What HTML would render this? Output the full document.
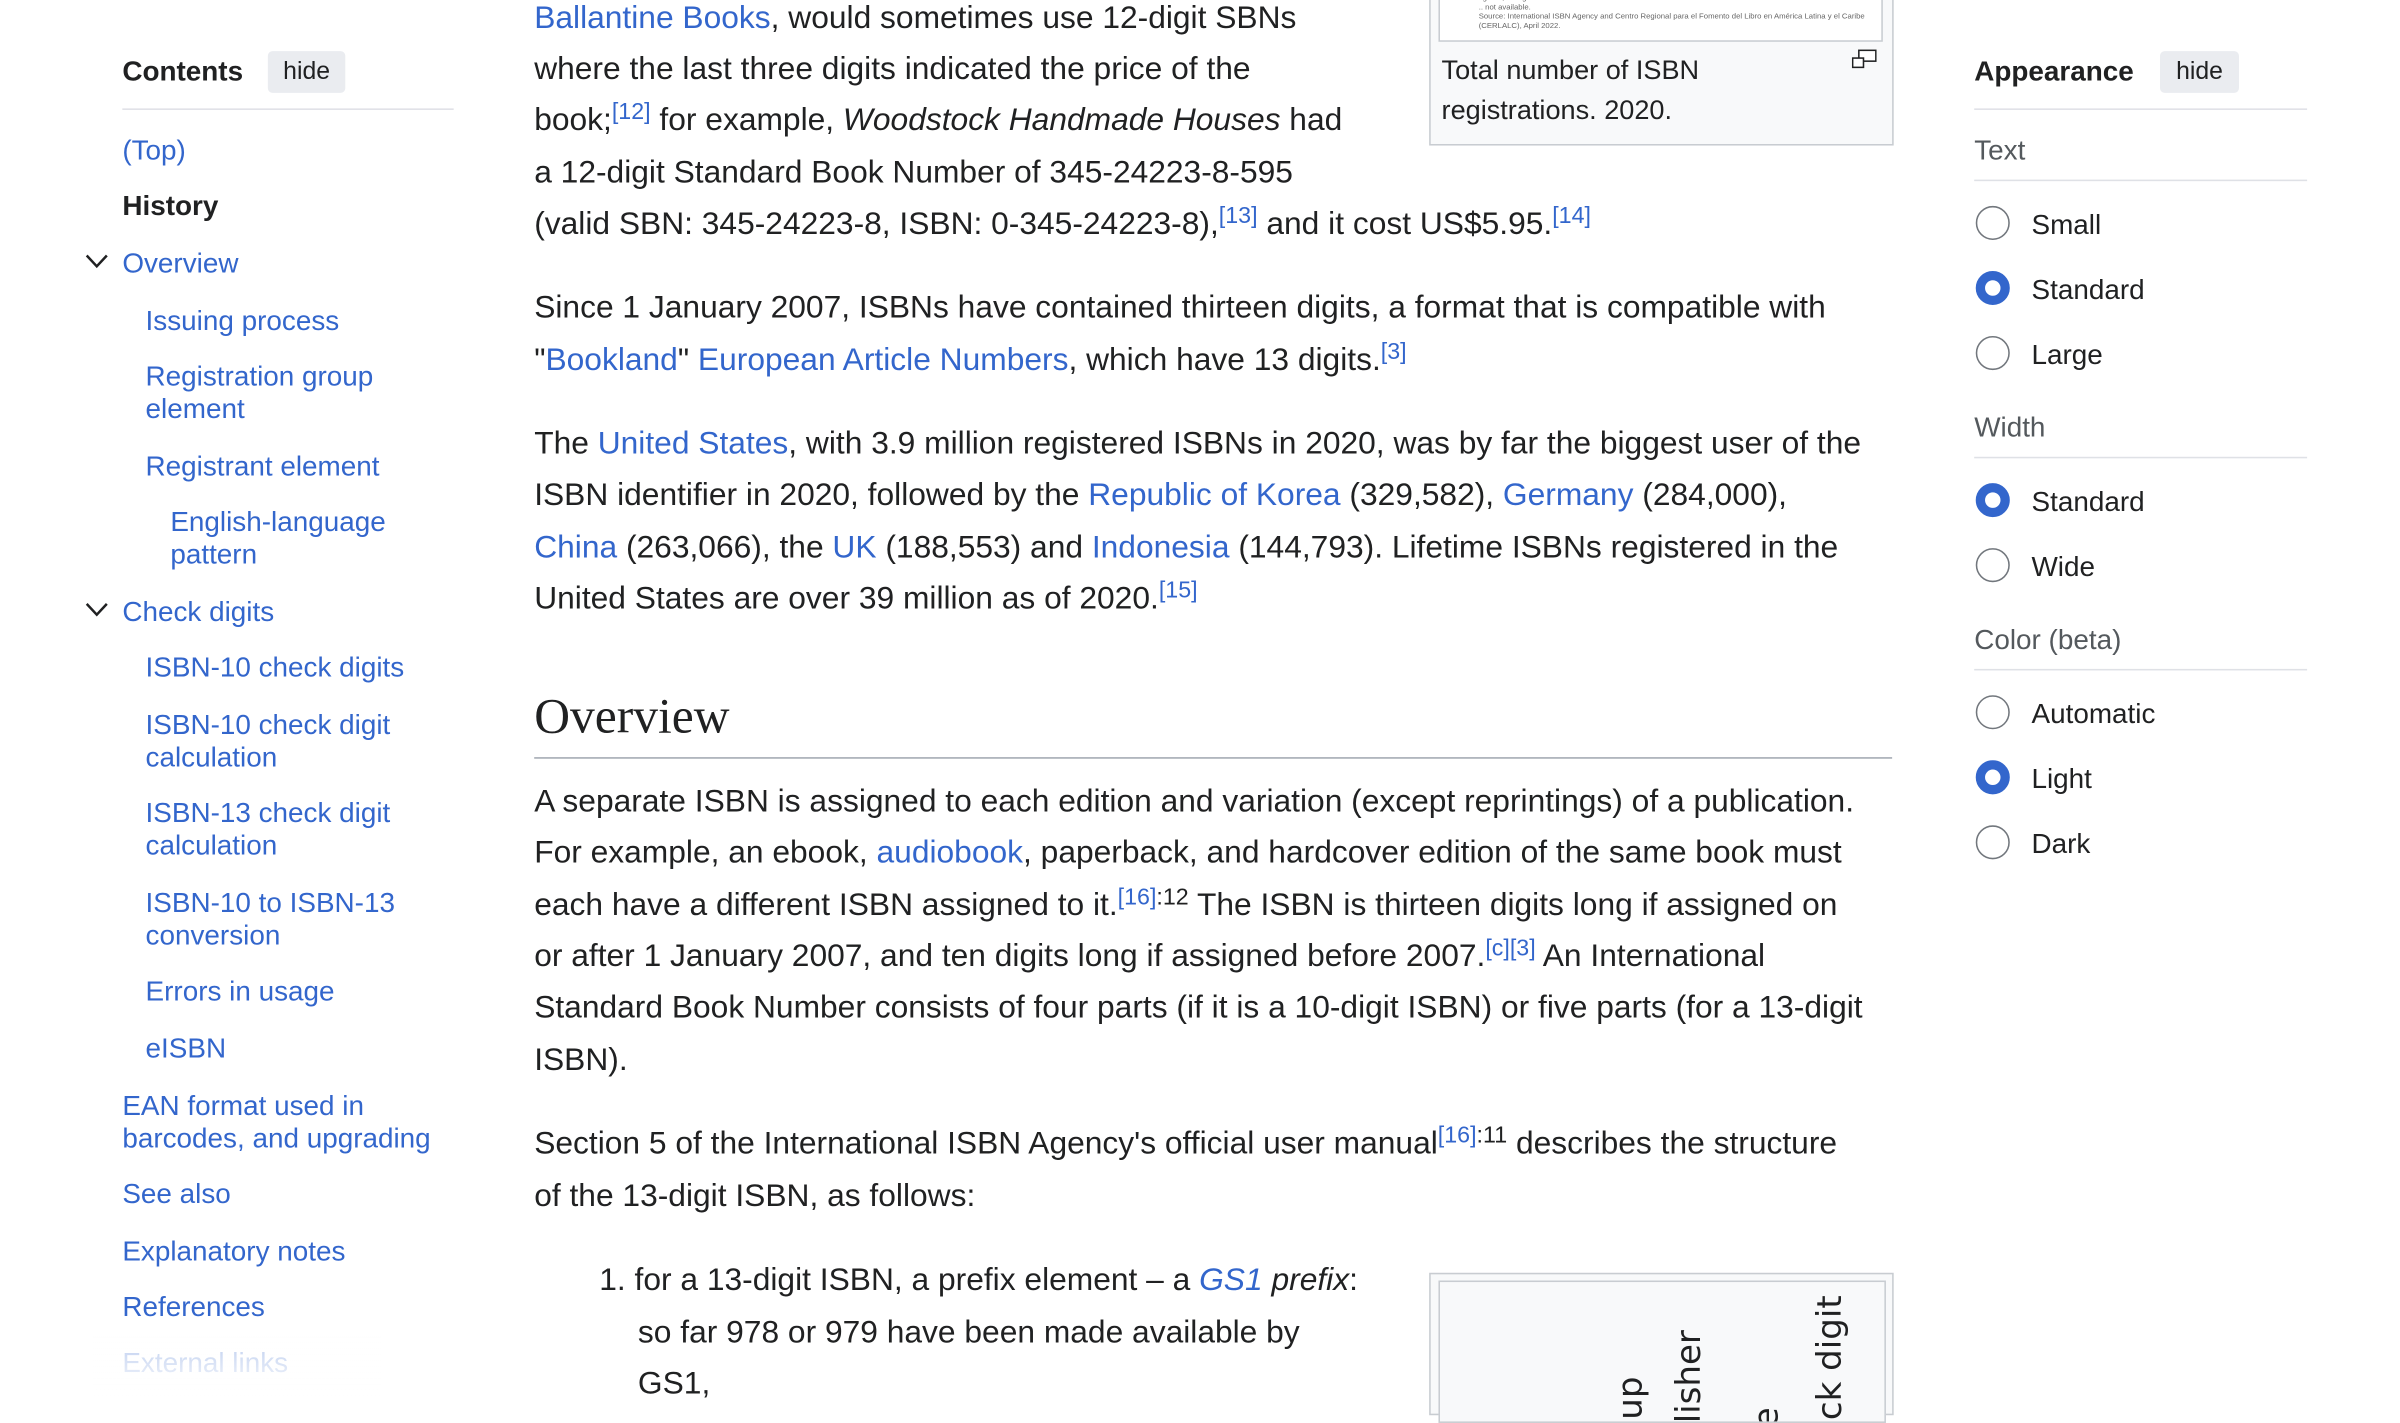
<!DOCTYPE html>
<html><head><meta charset="utf-8"><style>
html,body{margin:0;padding:0;background:#fff;overflow:hidden;width:2400px;height:1398px}
#w{position:absolute;left:0;top:0;width:1550px;height:903px;transform:scale(1.548387);transform-origin:0 0;font-family:"Liberation Sans",Arial,sans-serif;color:#202122}
.a{position:absolute;white-space:nowrap}
a{color:#3366cc;text-decoration:none}
.t{font-size:18px;line-height:21px;color:#3366cc}
.m{font-size:20.5px;line-height:34px}
sup{font-size:15px;line-height:0;vertical-align:7px;color:#3366cc}
sup.n{color:#202122}
.hb{position:absolute;background:#eaecf0;border-radius:3px;font-size:16px;line-height:27px;text-align:center;color:#202122}
.ln{position:absolute;height:1px;background:#dfe1e6}
.r{position:absolute;width:22px;height:22px;border:1.5px solid #72777d;border-radius:50%;box-sizing:border-box}
.r.on{border:6.5px solid #3366cc;background:#fff}
.rl{font-size:18px}
.g{font-size:18px;color:#54595d}
.v{position:absolute;transform:rotate(-90deg);transform-origin:0 0;font-family:'DejaVu Sans',sans-serif;font-size:22px;line-height:24px;white-space:nowrap}
</style></head><body><div id="w">
<!-- left TOC -->
<div class="a" style="left:79px;top:36px;font-size:18px;font-weight:bold">Contents</div>
<div class="hb" style="left:173px;top:33px;width:50px">hide</div>
<div class="ln" style="left:79px;top:70px;width:214px"></div>
<div class="a t" style="left:79px;top:87px">(Top)</div>
<div class="a" style="left:79px;top:123px;font-size:18px;font-weight:bold">History</div>
<svg class="a" style="left:55px;top:163px" width="16" height="12"><path d="M1 2 L7.5 9 L14 2" stroke="#202122" stroke-width="1.6" fill="none"/></svg>
<div class="a t" style="left:79px;top:160px">Overview</div>
<div class="a t" style="left:94px;top:197px">Issuing process</div>
<div class="a t" style="left:94px;top:233px">Registration group<br>element</div>
<div class="a t" style="left:94px;top:291px">Registrant element</div>
<div class="a t" style="left:110px;top:327px">English-language<br>pattern</div>
<svg class="a" style="left:55px;top:388px" width="16" height="12"><path d="M1 2 L7.5 9 L14 2" stroke="#202122" stroke-width="1.6" fill="none"/></svg>
<div class="a t" style="left:79px;top:385px">Check digits</div>
<div class="a t" style="left:94px;top:421px">ISBN-10 check digits</div>
<div class="a t" style="left:94px;top:458px">ISBN-10 check digit<br>calculation</div>
<div class="a t" style="left:94px;top:515px">ISBN-13 check digit<br>calculation</div>
<div class="a t" style="left:94px;top:573px">ISBN-10 to ISBN-13<br>conversion</div>
<div class="a t" style="left:94px;top:630px">Errors in usage</div>
<div class="a t" style="left:94px;top:667px">eISBN</div>
<div class="a t" style="left:79px;top:704px">EAN format used in<br>barcodes, and upgrading</div>
<div class="a t" style="left:79px;top:761px">See also</div>
<div class="a t" style="left:79px;top:798px">Explanatory notes</div>
<div class="a t" style="left:79px;top:834px">References</div>
<div class="a t" style="left:79px;top:870px;opacity:.35">External links</div>
<div class="a" style="left:60px;top:860px;width:240px;height:43px;background:linear-gradient(rgba(255,255,255,0),#fff)"></div>

<!-- main -->
<div class="a m" style="left:345px;top:-5px"><a>Ballantine Books</a>, would sometimes use 12-digit SBNs</div>
<div class="a m" style="left:345px;top:28px">where the last three digits indicated the price of the</div>
<div class="a m" style="left:345px;top:61px">book;<sup>[12]</sup> for example, <i>Woodstock Handmade Houses</i> had</div>
<div class="a m" style="left:345px;top:95px">a 12-digit Standard Book Number of 345-24223-8-595</div>
<div class="a m" style="left:345px;top:128px">(valid SBN: 345-24223-8, ISBN: 0-345-24223-8),<sup>[13]</sup> and it cost US$5.95.<sup>[14]</sup></div>

<div class="a m" style="left:345px;top:182px">Since 1 January 2007, ISBNs have contained thirteen digits, a format that is compatible with</div>
<div class="a m" style="left:345px;top:216px">"<a>Bookland</a>" <a>European Article Numbers</a>, which have 13 digits.<sup>[3]</sup></div>

<div class="a m" style="left:345px;top:270px">The <a>United States</a>, with 3.9 million registered ISBNs in 2020, was by far the biggest user of the</div>
<div class="a m" style="left:345px;top:303px">ISBN identifier in 2020, followed by the <a>Republic of Korea</a> (329,582), <a>Germany</a> (284,000),</div>
<div class="a m" style="left:345px;top:337px"><a>China</a> (263,066), the <a>UK</a> (188,553) and <a>Indonesia</a> (144,793). Lifetime ISBNs registered in the</div>
<div class="a m" style="left:345px;top:370px">United States are over 39 million as of 2020.<sup>[15]</sup></div>

<div class="a" style="left:345px;top:442px;font-family:'Liberation Serif',serif;font-size:32px;line-height:40px">Overview</div>
<div class="a" style="left:345px;top:489px;width:877px;height:1px;background:#a2a9b1"></div>

<div class="a m" style="left:345px;top:501px">A separate ISBN is assigned to each edition and variation (except reprintings) of a publication.</div>
<div class="a m" style="left:345px;top:534px">For example, an ebook, <a>audiobook</a>, paperback, and hardcover edition of the same book must</div>
<div class="a m" style="left:345px;top:568px">each have a different ISBN assigned to it.<sup>[16]</sup><sup class="n">:12</sup> The ISBN is thirteen digits long if assigned on</div>
<div class="a m" style="left:345px;top:601px">or after 1 January 2007, and ten digits long if assigned before 2007.<sup>[c][3]</sup> An International</div>
<div class="a m" style="left:345px;top:634px">Standard Book Number consists of four parts (if it is a 10-digit ISBN) or five parts (for a 13-digit</div>
<div class="a m" style="left:345px;top:668px">ISBN).</div>

<div class="a m" style="left:345px;top:722px">Section 5 of the International ISBN Agency's official user manual<sup>[16]</sup><sup class="n">:11</sup> describes the structure</div>
<div class="a m" style="left:345px;top:756px">of the 13-digit ISBN, as follows:</div>

<div class="a m" style="left:387px;top:810px">1. for a 13-digit ISBN, a prefix element – a <a><i>GS1</i></a> <i>prefix</i>:</div>
<div class="a m" style="left:412px;top:844px">so far 978 or 979 have been made available by</div>
<div class="a m" style="left:412px;top:877px">GS1,</div>

<!-- top figure -->
<div class="a" style="left:923px;top:-5px;width:298px;height:97px;background:#f8f9fa;border:1px solid #c8ccd1"></div>
<div class="a" style="left:929px;top:-5px;width:287px;height:32px;background:#fff;border:1px solid #c8ccd1;overflow:hidden;font-size:5px;line-height:6px;color:#666;padding-left:25px;box-sizing:border-box;white-space:normal">figures, owing to no or insufficient data.<br>.. not available.<br>Source: International ISBN Agency and Centro Regional para el Fomento del Libro en América Latina y el Caribe (CERLALC), April 2022.</div>
<div class="a" style="left:931px;top:32px;font-size:17.5px;line-height:26px">Total number of ISBN<br>registrations. 2020.</div>
<svg class="a" style="left:1196px;top:32px" width="16" height="13"><rect x="4.5" y="0.5" width="11" height="7" fill="#fff" stroke="#202122"/><rect x="0.5" y="5.5" width="7" height="6" fill="#fff" stroke="#202122"/></svg>

<!-- bottom figure -->
<div class="a" style="left:923px;top:822px;width:298px;height:90px;background:#f8f9fa;border:1px solid #c8ccd1"></div>
<div class="a" style="left:929px;top:827px;width:287px;height:90px;background:#f8f9fa;border:1px solid #c8ccd1;overflow:hidden">
 <div class="v" style="left:112px;top:128px">Group</div>
 <div class="v" style="left:150px;top:132px">Publisher</div>
 <div class="v" style="left:200px;top:128px">Title</div>
 <div class="v" style="left:241px;top:132px">Check digit</div>
</div>

<!-- right appearance -->
<div class="a" style="left:1275px;top:36px;font-size:18px;font-weight:bold">Appearance</div>
<div class="hb" style="left:1395px;top:33px;width:51px">hide</div>
<div class="ln" style="left:1275px;top:70px;width:215px"></div>
<div class="a g" style="left:1275px;top:87px">Text</div>
<div class="ln" style="left:1275px;top:116px;width:215px"></div>
<div class="r" style="left:1276px;top:133px"></div><div class="a rl" style="left:1312px;top:135px">Small</div>
<div class="r on" style="left:1276px;top:175px"></div><div class="a rl" style="left:1312px;top:177px">Standard</div>
<div class="r" style="left:1276px;top:217px"></div><div class="a rl" style="left:1312px;top:219px">Large</div>
<div class="a g" style="left:1275px;top:266px">Width</div>
<div class="ln" style="left:1275px;top:295px;width:215px"></div>
<div class="r on" style="left:1276px;top:312px"></div><div class="a rl" style="left:1312px;top:314px">Standard</div>
<div class="r" style="left:1276px;top:354px"></div><div class="a rl" style="left:1312px;top:356px">Wide</div>
<div class="a g" style="left:1275px;top:403px">Color (beta)</div>
<div class="ln" style="left:1275px;top:432px;width:215px"></div>
<div class="r" style="left:1276px;top:449px"></div><div class="a rl" style="left:1312px;top:451px">Automatic</div>
<div class="r on" style="left:1276px;top:491px"></div><div class="a rl" style="left:1312px;top:493px">Light</div>
<div class="r" style="left:1276px;top:533px"></div><div class="a rl" style="left:1312px;top:535px">Dark</div>
</div></body></html>
